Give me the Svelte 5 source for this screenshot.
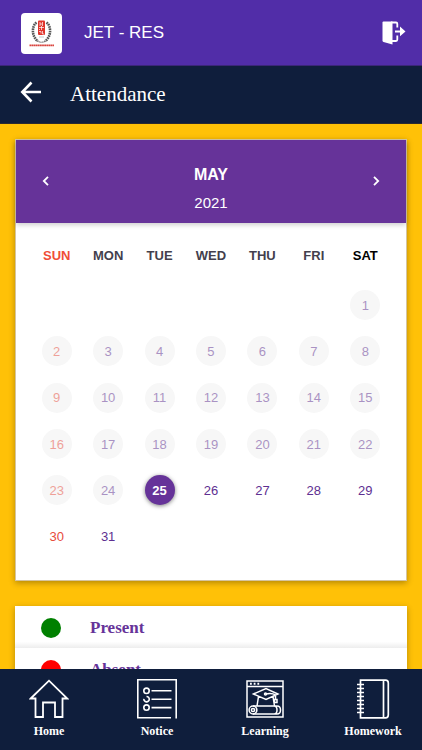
<script>
  const weekdays = ['SUN', 'MON', 'TUE', 'WED', 'THU', 'FRI', 'SAT'];
  const today = 25;
  const firstWeekday = 6;
  const cells = [
    ...Array(firstWeekday).fill(null),
    ...Array.from({ length: 31 }, (_, i) => i + 1)
  ];
  const weeks = [];
  for (let i = 0; i < cells.length; i += 7) {
    const week = cells.slice(i, i + 7);
    while (week.length < 7) week.push(null);
    weeks.push(week);
  }
  const legend = [
    { label: 'Present', color: 'green' },
    { label: 'Absent', color: 'red' }
  ];
</script>

<div class="app">
  <header class="brand">
    <svg class="logo" viewBox="0 0 41 41" role="img" aria-label="School crest">
      <rect width="41" height="41" rx="4" fill="#fff" />
      <path d="M15.5 9.5C10.5 13 10.5 24 17 28M25.500 9.500C30.500 13 30.500 24 24 28" fill="none" stroke="#555" stroke-width="2.600" stroke-dasharray="1.600 .7" />
      <path d="M15.500 27.500Q20.500 31 25.500 27.500" fill="none" stroke="#777" stroke-width="1.200" stroke-dasharray="1.500 .5" />
      <rect x="17" y="7.500" width="7" height="14.500" rx="1" fill="#e0342c" />
      <path d="M18 10h2v2h-2M21.500 9v4M18 14.500h5M20.500 13v4M18 18.500h2v2M21.500 18v3h1.500M18 16.500h1" fill="none" stroke="#fff" stroke-width=".7" />
      <path d="M18 24h5" stroke="#bbb" stroke-width=".8" />
      <path d="M8.500 32.300h24.500" stroke="#d9443e" stroke-width="1.700" stroke-dasharray="1.800 .3" />
    </svg>
    <h1>JET - RES</h1>
    <button class="icon-button" aria-label="Log out">
      <svg width="24" height="24" viewBox="0 0 24 24">
        <path d="M1.500.5H10.500V23.500L1.500 21Q.5 20.700.5 19.500V1.500Q.5.500 1.500.500Z" fill="#fff" />
        <path d="M9 1.500h5q1.300 0 1.300 1.300V6.500M15.300 14.500v4q0 1.500-1.300 1.500h-4" fill="none" stroke="#fff" stroke-width="1.800" />
        <path d="M13 9.400h5V5.500l5.500 4.900-5.500 4.900v-3.900h-5z" fill="#fff" />
      </svg>
    </button>
  </header>

  <div class="titlebar">
    <button class="icon-button" aria-label="Back">
      <svg width="22" height="22" viewBox="0 0 22 22" fill="none" stroke="#fff" stroke-width="2.600">
        <path d="M21 11H2.500M11.500 1.500L2.300 11l9.200 9.500" />
      </svg>
    </button>
    <h2>Attendance</h2>
  </div>

  <main>
    <section class="calendar" aria-label="Calendar">
      <div class="month">
        <button class="icon-button" aria-label="Previous month">
          <svg width="8" height="10" viewBox="0 0 8 10" fill="none" stroke="#fff" stroke-width="1.800"><path d="M6 .8L1.800 5 6 9.200" /></svg>
        </button>
        <div class="month-name"><strong>MAY</strong><span>2021</span></div>
        <button class="icon-button" aria-label="Next month">
          <svg width="8" height="10" viewBox="0 0 8 10" fill="none" stroke="#fff" stroke-width="1.800"><path d="M2 .8L6.200 5 2 9.200" /></svg>
        </button>
      </div>
      <table>
        <thead>
          <tr>
            {#each weekdays as name}
              <th scope="col">{name}</th>
            {/each}
          </tr>
        </thead>
        <tbody>
          {#each weeks as week}
            <tr>
              {#each week as day}
                <td>
                  {#if day}
                    <button class="day" class:past={day < today} class:today={day === today}><span>{day}</span></button>
                  {/if}
                </td>
              {/each}
            </tr>
          {/each}
        </tbody>
      </table>
    </section>

    <ul class="legend">
      {#each legend as item}
        <li><span class="dot" style="background: {item.color}"></span>{item.label}</li>
      {/each}
    </ul>
  </main>

  <nav aria-label="Main">
    <a href="#home">
      <svg viewBox="0 0 40 40" fill="none" stroke="#fff" stroke-width="1.800">
        <path d="M1.700 19.500L20 1.700l18.300 17.800h-4.800V38h-7.500V23.500H14V38H6.500V19.500z" />
      </svg>
      Home
    </a>
    <a href="#notice">
      <svg viewBox="0 0 40 40" fill="none" stroke="#fff" stroke-width="1.600">
        <path d="M34 38.800H.8V.8h38.400V39.500M14.500 11.800H34.500M14.500 20.200H34.500M14.500 28.600H34.500" />
        <circle cx="9.500" cy="11.800" r="2.700" />
        <path d="M9.500 17.500A2.700 2.700 0 1 1 6.900 19.800" />
        <circle cx="9.500" cy="28.600" r="2.700" />
      </svg>
      Notice
    </a>
    <a href="#learning">
      <svg viewBox="0 0 40 40" fill="none" stroke="#fff" stroke-width="1.500">
        <path d="M2 2h36v36H2zM2 7.500h36" />
        <path d="M5 4.800h1.800M8.700 4.800h1.800M12.400 4.800h1.800" stroke-width="2" />
        <path d="M8.500 15L21 9.500 33 15 21 20.500zM13.500 17.500L12 27M28 17.500L29.500 27M20.500 15Q27 13.500 30.500 16v4.500M29.500 20.500h2.500v3h-2.500z" />
        <circle cx="20.500" cy="15" r="1" />
        <path d="M8 27H32Q35.500 27 35.500 31T32 35H8M29 27Q32 27 32 31T29 35" />
        <circle cx="8" cy="31" r="3.900" />
        <circle cx="8" cy="31" r="1.600" />
      </svg>
      Learning
    </a>
    <a href="#homework">
      <svg viewBox="0 0 40 40" fill="none" stroke="#fff" stroke-width="1.700">
        <path d="M7.500 1.200h25Q35.300 1.200 35.300 4v32q0 2.800-2.800 2.800H7.500zM30.500 1.200v37.600" />
        <path d="M4 5.500h7M4 9.500h7M4 13.500h7M4 17.500h7M4 21.500h7M4 25.500h7M4 29.500h7M4 33.500h7" />
      </svg>
      Homework
    </a>
  </nav>
</div>

<style>
  .app {
    display: flex;
    flex-direction: column;
    height: 100vh;
    background: #ffc107;
    font-family: "Liberation Sans", Arial, sans-serif;
  }
  h1, h2, ul { margin: 0; padding: 0; font-weight: 400; }
  button { font: inherit; color: inherit; border: 0; padding: 0; background: none; cursor: pointer; }
  svg { display: block; flex: none; }
  .brand {
    display: flex;
    align-items: center;
    flex: none;
    height: 66px;
    box-sizing: border-box;
    padding: 1px 16px 0 21px;
    background: #512da8;
    border-bottom: 1px solid #3c2678;
    color: #fff;
  }
  .logo { width: 41px; height: 41px; margin-right: 22px; }
  h1 { flex: 1; font-size: 17px; line-height: 24px; }
  .titlebar {
    display: flex;
    align-items: center;
    flex: none;
    gap: 28px;
    height: 58px;
    box-sizing: border-box;
    padding: 0 20px 6px;
    background: #0f1e3c;
    border-bottom: 1px solid #2c2a30;
    color: #fff;
  }
  h2 { padding-top: 4px; font-family: "Liberation Serif", "Times New Roman", serif; font-size: 21px; line-height: 24px; }
  main { flex: 1; min-height: 0; overflow-y: auto; scrollbar-width: none; padding: 15px; }
  .calendar {
    padding-bottom: 20px;
    background: #fff;
    border: 1px solid #d5c4a0;
    box-shadow: 0 2px 6px rgba(0, 0, 0, 0.3);
  }
  .month {
    display: flex;
    align-items: flex-start;
    justify-content: space-between;
    height: 83px;
    box-sizing: border-box;
    padding: 25px 26px 0;
    background: #639;
    color: #fff;
    box-shadow: 0 2px 5px rgba(0, 0, 0, 0.2);
  }
  .month button { padding-top: 11px; }
  .month-name { display: flex; flex-direction: column; align-items: center; gap: 8px; }
  .month-name strong { font-size: 16px; line-height: 20px; }
  .month-name span { font-size: 15px; line-height: 20px; }
  table { width: calc(100% - 30px); margin: 0 15px; border-collapse: collapse; table-layout: fixed; font-size: 13px; }
  th, td { padding: 0; text-align: center; vertical-align: middle; }
  th { box-sizing: border-box; height: 59px; padding-top: 7px; color: #433f4d; line-height: 16px; }
  th:first-child { color: #f04e36; }
  th:last-child { color: #000; }
  tbody { height: 278px; }
  td { height: 46px; }
  .day { width: 30px; height: 30px; border-radius: 50%; color: #5e2f91; vertical-align: middle; }
  td:first-child .day { color: #e74c3c; }
  .past { background: #f7f7f7; }
  .past span { opacity: 0.5; }
  .day.today { background: #639; color: #fff; font-weight: 700; box-shadow: 0 1px 4px rgba(0, 0, 0, 0.5); }
  .legend {
    margin-top: 25px;
    list-style: none;
    background: #fff;
    box-shadow: 0 2px 6px rgba(0, 0, 0, 0.3);
  }
  .legend li {
    display: flex;
    align-items: center;
    gap: 29px;
    height: 42px;
    box-sizing: border-box;
    padding: 2px 26px 0;
    background: linear-gradient(#fff 85%, #ededed);
    color: #639;
    font: 700 17px/20px "Liberation Serif", "Times New Roman", serif;
  }
  .dot { width: 20px; height: 20px; border-radius: 50%; }
  nav {
    display: flex;
    justify-content: space-between;
    flex: none;
    height: 81px;
    box-sizing: border-box;
    padding: 10px 16px 0;
    background: #0f1e3c;
  }
  nav a {
    display: flex;
    flex-direction: column;
    align-items: center;
    gap: 4px;
    width: 66px;
    color: #fff;
    text-decoration: none;
    font: 700 12px/16px "Liberation Serif", "Times New Roman", serif;
  }
  nav svg { width: 40px; height: 40px; }
</style>
